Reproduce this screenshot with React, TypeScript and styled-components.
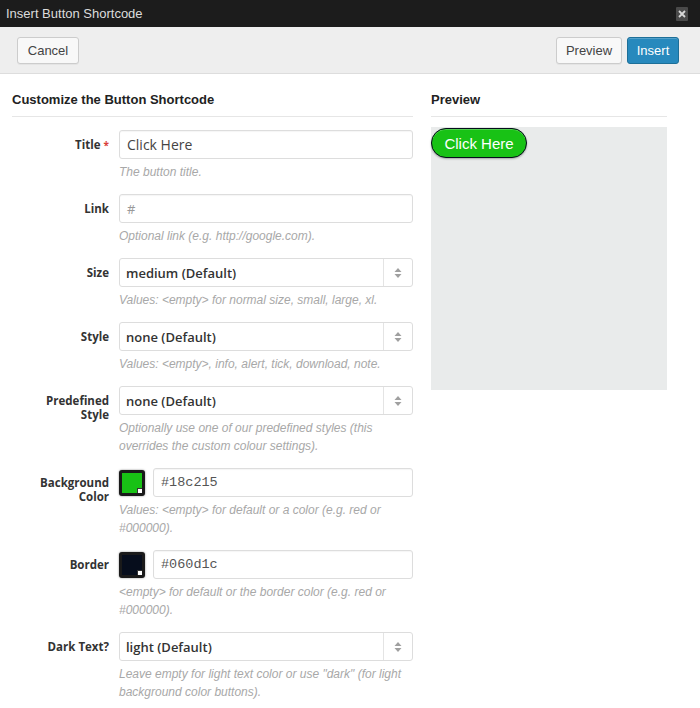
import React from "react";
import styled, { createGlobalStyle } from "styled-components";

const GlobalStyle = createGlobalStyle`
  html, body { margin: 0; padding: 0; background: #ffffff; }
  body { font-family: "Liberation Sans", Arial, sans-serif; }
  * { box-sizing: border-box; }
`;

const Dialog = styled.div`
  width: 700px;
  height: 708px;
  background: #ffffff;
  overflow: hidden;
`;

const TitleBar = styled.div`
  height: 27px;
  background: #1c1c1c;
  display: flex;
  align-items: center;
  justify-content: space-between;
  padding: 0 12px 0 6px;
  color: #dcdcdc;
  font-size: 13px;
  font-family: "Liberation Sans", Arial, sans-serif;
`;

const CloseBox = styled.div`
  width: 12px;
  height: 14px;
  background: #4a4a4a;
  border-radius: 1px;
  display: flex;
  align-items: center;
  justify-content: center;
`;

const Toolbar = styled.div`
  height: 47px;
  background: #eeeeee;
  border-bottom: 1px solid #dddddd;
  display: flex;
  align-items: center;
  justify-content: space-between;
  padding: 0 21px 0 17px;
`;

const ButtonGroup = styled.div`
  display: flex;
  gap: 5px;
`;

const ToolButton = styled.button<{ $primary?: boolean; $w: number }>`
  width: ${(p) => p.$w}px;
  height: 27px;
  border-radius: 3px;
  font-family: "Liberation Sans", Arial, sans-serif;
  font-size: 13px;
  padding: 0;
  cursor: pointer;
  border: 1px solid ${(p) => (p.$primary ? "#1d6f98" : "#cccccc")};
  background: ${(p) => (p.$primary ? "#2789bd" : "#f8f8f8")};
  color: ${(p) => (p.$primary ? "#ffffff" : "#444444")};
  box-shadow: ${(p) =>
    p.$primary ? "inset 0 1px 0 rgba(255,255,255,0.2)" : "0 1px 0 rgba(0,0,0,0.04)"};
`;

const Body = styled.div`
  display: flex;
  gap: 18px;
  padding: 14px 0 0 12px;
`;

const Column = styled.div<{ $w: number }>`
  width: ${(p) => p.$w}px;
  display: flex;
  flex-direction: column;
`;

const SectionTitle = styled.h2`
  margin: 0;
  font-family: "Liberation Sans", Arial, sans-serif;
  font-weight: 700;
  font-size: 13px;
  line-height: 24px;
  color: #222222;
  padding-bottom: 4px;
  border-bottom: 1px solid #e6e6e6;
`;

const Form = styled.div`
  display: flex;
  flex-direction: column;
  gap: 13px;
  padding-top: 13px;
`;

const Row = styled.div`
  display: grid;
  grid-template-columns: 97px 1fr;
  column-gap: 10px;
`;

const Label = styled.label`
  text-align: right;
  font-family: "Open Sans", sans-serif;
  font-weight: 700;
  font-size: 11.5px;
  line-height: 14px;
  color: #333333;
  padding-top: 8px;
`;

const Required = styled.span`
  color: #d9403a;
  font-size: 10px;
  vertical-align: top;
  margin-left: 3px;
`;

const Field = styled.div`
  display: flex;
  flex-direction: column;
`;

const TextBox = styled.div<{ $mono?: boolean }>`
  flex: 1 1 auto;
  min-width: 0;
  height: 29px;
  border: 1px solid #dddddd;
  border-radius: 3px;
  background: #ffffff;
  display: flex;
  align-items: center;
  padding-left: 7px;
  font-family: ${(p) =>
    p.$mono ? `"Liberation Mono", "DejaVu Sans Mono", monospace` : `"Open Sans", sans-serif`};
  font-size: ${(p) => (p.$mono ? "13.5px" : "14px")};
  color: ${(p) => (p.$mono ? "#555555" : "#444444")};
  box-shadow: inset 0 1px 1px rgba(0, 0, 0, 0.04);
`;

const Placeholder = styled.span`
  color: #999999;
  font-size: 13px;
`;

const SelectBox = styled.div`
  height: 29px;
  border: 1px solid #dddddd;
  border-radius: 3px;
  background: #ffffff;
  display: flex;
  align-items: stretch;
`;

const SelectValue = styled.div`
  flex: 1;
  display: flex;
  align-items: center;
  padding-left: 6px;
  font-family: "Open Sans", sans-serif;
  font-weight: 600;
  font-size: 13px;
  color: #333333;
`;

const SelectArrow = styled.div`
  width: 29px;
  border-left: 1px solid #e4e4e4;
  display: flex;
  align-items: center;
  justify-content: center;
`;

const ColorRow = styled.div`
  display: flex;
  gap: 8px;
  align-items: center;
`;

const Swatch = styled.div<{ $color: string }>`
  position: relative;
  width: 26px;
  height: 26px;
  border-radius: 3px;
  background: #1a1a1a;
  padding: 3px;
  box-shadow: 0 0 2px rgba(0, 0, 0, 0.5);
  flex-shrink: 0;
  &::before {
    content: "";
    display: block;
    width: 100%;
    height: 100%;
    background: ${(p) => p.$color};
  }
`;

const SwatchCorner = styled.span`
  position: absolute;
  right: 3px;
  bottom: 3px;
  width: 5px;
  height: 5px;
  background: #ffffff;
  border-left: 1px solid #333;
  border-top: 1px solid #333;
`;

const Help = styled.div`
  margin-top: 4px;
  font-family: "Liberation Sans", Arial, sans-serif;
  font-style: italic;
  font-size: 12px;
  line-height: 18px;
  color: #a8a8a8;
`;

const PreviewArea = styled.div`
  margin-top: 10px;
  height: 263px;
  background: #e9ebeb;
  display: flex;
  align-items: flex-start;
`;

const PreviewButton = styled.div`
  margin-top: 1px;
  width: 96px;
  height: 30px;
  border-radius: 15px;
  background: #18c215;
  border: 1px solid #060d1c;
  box-shadow: inset 0 1px 0 rgba(255, 255, 255, 0.25), 0 1px 2px rgba(0, 0, 0, 0.3);
  color: #ffffff;
  font-family: "Liberation Sans", Arial, sans-serif;
  font-size: 15px;
  display: flex;
  align-items: center;
  justify-content: center;
`;

const UpDown = () => (
  <svg width="8" height="12" viewBox="0 0 8 12">
    <path d="M4 1 L7.5 5 H0.5 Z" fill="#a0a0a0" />
    <path d="M4 11 L7.5 7 H0.5 Z" fill="#a0a0a0" />
  </svg>
);

type SelectProps = { value: string };
const Select = ({ value }: SelectProps) => (
  <SelectBox>
    <SelectValue>{value}</SelectValue>
    <SelectArrow>
      <UpDown />
    </SelectArrow>
  </SelectBox>
);

type ColorProps = { color: string; value: string };
const ColorField = ({ color, value }: ColorProps) => (
  <ColorRow>
    <Swatch $color={color}>
      <SwatchCorner />
    </Swatch>
    <TextBox $mono>{value}</TextBox>
  </ColorRow>
);

export default function App() {
  return (
    <>
      <GlobalStyle />
      <Dialog>
        <TitleBar>
          <span>Insert Button Shortcode</span>
          <CloseBox>
            <svg width="8" height="8" viewBox="0 0 8 8">
              <path d="M1 1 L7 7 M7 1 L1 7" stroke="#d8d8d8" strokeWidth="1.8" />
            </svg>
          </CloseBox>
        </TitleBar>
        <Toolbar>
          <ToolButton $w={62}>Cancel</ToolButton>
          <ButtonGroup>
            <ToolButton $w={66}>Preview</ToolButton>
            <ToolButton $w={52} $primary>
              Insert
            </ToolButton>
          </ButtonGroup>
        </Toolbar>
        <Body>
          <Column $w={401}>
            <SectionTitle>Customize the Button Shortcode</SectionTitle>
            <Form>
              <Row>
                <Label>
                  Title<Required>*</Required>
                </Label>
                <Field>
                  <TextBox>Click Here</TextBox>
                  <Help>The button title.</Help>
                </Field>
              </Row>
              <Row>
                <Label>Link</Label>
                <Field>
                  <TextBox>
                    <Placeholder>#</Placeholder>
                  </TextBox>
                  <Help>Optional link (e.g. http://google.com).</Help>
                </Field>
              </Row>
              <Row>
                <Label>Size</Label>
                <Field>
                  <Select value="medium (Default)" />
                  <Help>Values: &lt;empty&gt; for normal size, small, large, xl.</Help>
                </Field>
              </Row>
              <Row>
                <Label>Style</Label>
                <Field>
                  <Select value="none (Default)" />
                  <Help>Values: &lt;empty&gt;, info, alert, tick, download, note.</Help>
                </Field>
              </Row>
              <Row>
                <Label>
                  Predefined
                  <br />
                  Style
                </Label>
                <Field>
                  <Select value="none (Default)" />
                  <Help>
                    Optionally use one of our predefined styles (this overrides the custom colour
                    settings).
                  </Help>
                </Field>
              </Row>
              <Row>
                <Label>
                  Background
                  <br />
                  Color
                </Label>
                <Field>
                  <ColorField color="#18c215" value="#18c215" />
                  <Help>Values: &lt;empty&gt; for default or a color (e.g. red or #000000).</Help>
                </Field>
              </Row>
              <Row>
                <Label>Border</Label>
                <Field>
                  <ColorField color="#060d1c" value="#060d1c" />
                  <Help>&lt;empty&gt; for default or the border color (e.g. red or #000000).</Help>
                </Field>
              </Row>
              <Row>
                <Label>Dark Text?</Label>
                <Field>
                  <Select value="light (Default)" />
                  <Help>
                    Leave empty for light text color or use "dark" (for light background color
                    buttons).
                  </Help>
                </Field>
              </Row>
            </Form>
          </Column>
          <Column $w={236}>
            <SectionTitle>Preview</SectionTitle>
            <PreviewArea>
              <PreviewButton>Click Here</PreviewButton>
            </PreviewArea>
          </Column>
        </Body>
      </Dialog>
    </>
  );
}
